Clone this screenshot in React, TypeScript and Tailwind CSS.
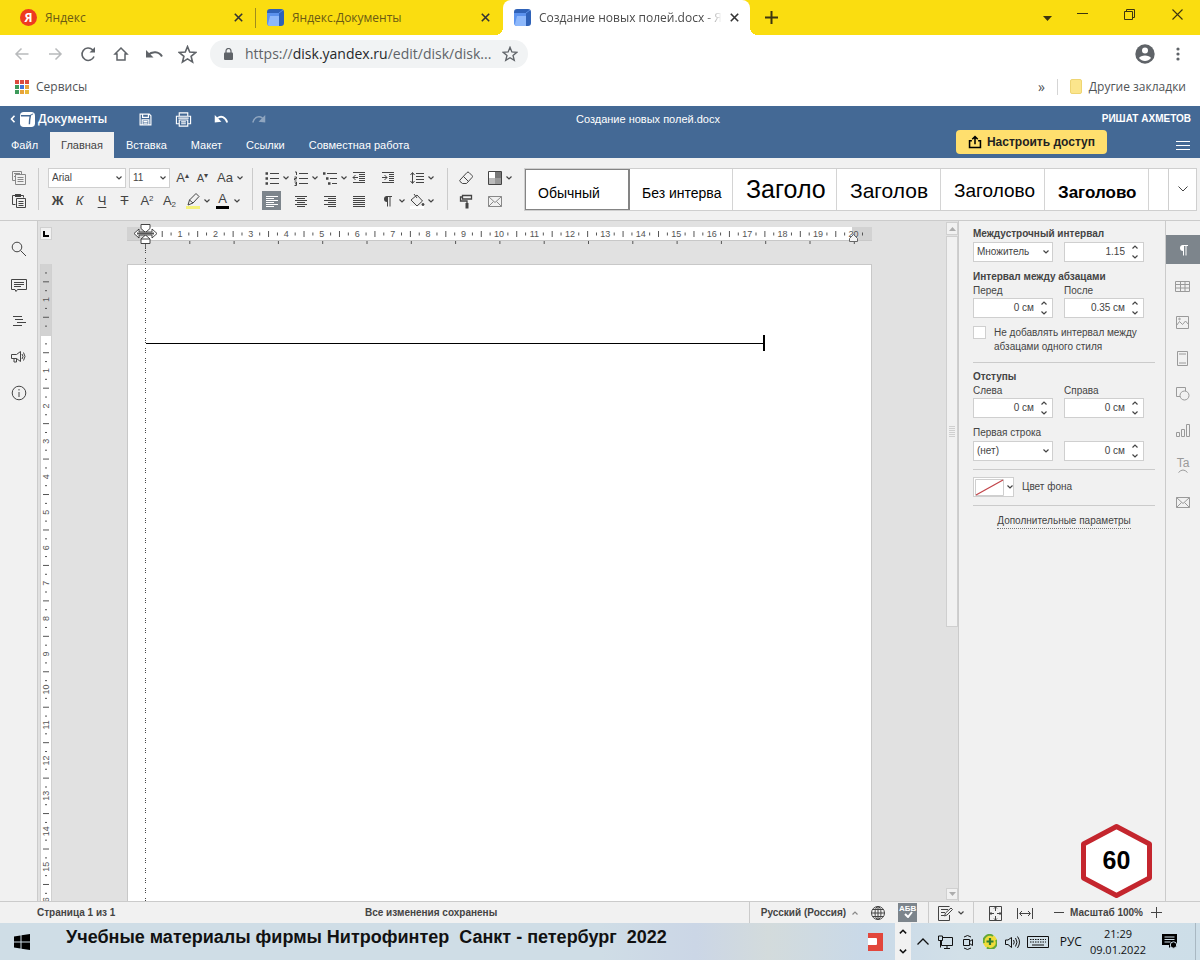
import type { ReactNode } from 'react';
import clsx from 'clsx';

const CM = 35.45;
const PAGE_LEFT_MARGIN = 18;

interface IconProps {
  children: ReactNode;
  size?: number;
  className?: string;
}

// Line icon on an 18 unit grid
function Icon({ children, size = 18, className }: IconProps) {
  return (
    <svg
      width={size}
      height={size}
      viewBox="0 0 18 18"
      fill="none"
      stroke="currentColor"
      aria-hidden="true"
      className={clsx('shrink-0', className)}
    >
      {children}
    </svg>
  );
}

function Chevron({ up = false, className }: { up?: boolean; className?: string }) {
  return (
    <svg width="6" height="4" viewBox="0 0 6 4" fill="none" stroke="currentColor" strokeWidth="1.2" aria-hidden="true" className={clsx('shrink-0', className)}>
      <path d={up ? 'M.5 3.5 3 1l2.5 2.5' : 'M.5.5 3 3 5.5.5'} />
    </svg>
  );
}

function DocsLogo() {
  return (
    <svg width="17" height="17" viewBox="0 0 17 17" aria-hidden="true" className="shrink-0">
      <path d="M3 0h11q3 0 3 3v11q0 3-3 3h-2V4H0V3q0-3 3-3Z" fill="#2f62b8" />
      <path d="M0 4h12v13H3q-3 0-3-3Z" fill="#5b92ee" />
      <path d="M3 7h9v10H3q-2 0-2-2Z" fill="#8db8fb" />
      <path d="m12 4 4-3" stroke="#5b8fe6" />
    </svg>
  );
}

function CloseIcon() {
  return (
    <svg width="9" height="9" viewBox="0 0 9 9" stroke="currentColor" strokeWidth="1.6" aria-hidden="true">
      <path d="m.8.8 7.4 7.4M8.2.8.8 8.2" />
    </svg>
  );
}

function Star({ size }: { size: number }) {
  return (
    <Icon size={size}>
      <path strokeWidth="1.5" d="m9 1.5 2.1 5.2 5.6.4-4.3 3.6 1.4 5.5L9 13.2l-4.8 3 1.4-5.5-4.3-3.6 5.6-.4Z" />
    </Icon>
  );
}

interface BrowserTabProps {
  title: string;
  icon: ReactNode;
  active?: boolean;
  divider?: boolean;
}

function BrowserTab({ title, icon, active, divider }: BrowserTabProps) {
  return (
    <div
      className={clsx(
        'relative flex h-[35px] w-[247px] items-center gap-2 pl-[11px] pr-[13px]',
        active ? 'rounded-t-lg bg-white text-[#4a4a4a]' : 'text-[#6b5b14]',
      )}
    >
      {icon}
      <button
        className={clsx(
          'flex-1 whitespace-nowrap text-left text-[12px] leading-4',
          active && '[mask-image:linear-gradient(to_right,#000_90%,transparent)]',
        )}
      >
        {title}
      </button>
      <button aria-label="Закрыть вкладку" className="text-[#333]">
        <CloseIcon />
      </button>
      {divider && <span className="absolute right-0 top-2 h-5 w-px bg-[#a08c1c]" />}
      {active && (
        <>
          <span className="absolute -left-2 bottom-0 h-2 w-2 bg-[radial-gradient(circle_at_0_0,#fadd10_8px,#fff_8px)]" />
          <span className="absolute -right-2 bottom-0 h-2 w-2 bg-[radial-gradient(circle_at_100%_0,#fadd10_8px,#fff_8px)]" />
        </>
      )}
    </div>
  );
}

function TabStrip() {
  return (
    <div className="flex h-[35px] bg-[#fadd10] pl-[9px]">
      <BrowserTab
        title="Яндекс"
        divider
        icon={
          <span className="flex h-[17px] w-[17px] shrink-0 items-center justify-center rounded-full bg-[#ee3a20] text-[12px] font-bold leading-4 text-white">
            Я
          </span>
        }
      />
      <BrowserTab title="Яндекс.Документы" icon={<DocsLogo />} />
      <BrowserTab title="Создание новых полей.docx - Я" icon={<DocsLogo />} active />
      <button aria-label="Новая вкладка" className="ml-[15px] text-[#3d3510]">
        <svg width="13" height="13" viewBox="0 0 13 13" stroke="currentColor" strokeWidth="2" aria-hidden="true">
          <path d="M6.5 0v13M0 6.5h13" />
        </svg>
      </button>
      <div className="ml-auto flex items-start text-[#3d3510]">
        <button aria-label="Список вкладок" className="mr-[25px] mt-4">
          <svg width="9" height="5" viewBox="0 0 9 5" fill="currentColor" aria-hidden="true"><path d="M0 0h9L4.500 5Z" /></svg>
        </button>
        <button aria-label="Свернуть" className="mr-9 mt-[13px] h-px w-[11px] bg-[#3d3510]" />
        <button aria-label="Восстановить" className="mr-[37px] mt-[9px]">
          <svg width="11" height="11" viewBox="0 0 11 11" fill="none" stroke="currentColor" aria-hidden="true">
            <path d="M.5 2.500h8v8h-8ZM2.500 2.500v-2h8v8h-2" />
          </svg>
        </button>
        <button aria-label="Закрыть" className="mr-[17px] mt-[9px]">
          <svg width="11" height="11" viewBox="0 0 11 11" stroke="currentColor" strokeWidth="1.100" aria-hidden="true">
            <path d="m.5.5 10 10m0-10-10 10" />
          </svg>
        </button>
      </div>
    </div>
  );
}

function AddressBar() {
  return (
    <div className="flex h-[38px] items-center bg-white text-[#5f6368]">
      <div className="flex w-[210px] items-center gap-[15px] pl-[13px]">
        <button aria-label="Назад" className="text-[#b8babc]">
          <Icon><path strokeWidth="1.500" d="M15.500 9h-13M8.500 3.500 3 9l5.500 5.500" /></Icon>
        </button>
        <button aria-label="Вперёд" className="text-[#b8babc]">
          <Icon><path strokeWidth="1.500" d="M3 9h12.500M9.500 3.500 15 9l-5.500 5.500" /></Icon>
        </button>
        <button aria-label="Обновить">
          <Icon>
            <path strokeWidth="1.600" d="M15 11.500A6.200 6.200 0 1 1 13.600 4.800L15.500 6.500" />
            <path fill="currentColor" stroke="none" d="M16 2v5.500h-5.500Z" />
          </Icon>
        </button>
        <button aria-label="Домой">
          <Icon><path strokeWidth="1.500" d="M9 3 3 9h2v6h8V9h2Z" /></Icon>
        </button>
        <button aria-label="Вернуть">
          <Icon>
            <path strokeWidth="2" d="M3 10c4-4 11-4 14 1.500" />
            <path fill="currentColor" stroke="none" d="M1 5v7.500h7.500Z" />
          </Icon>
        </button>
        <button aria-label="Избранное"><Star size={19} /></button>
      </div>
      <div className="flex h-7 w-[318px] items-center rounded-full bg-[#f1f3f4] pl-[14px] pr-[10px]">
        <svg width="9" height="12" viewBox="0 0 9 12" aria-hidden="true">
          <path d="M2 5V3a2.500 2.500 0 0 1 5 0v2" fill="none" stroke="currentColor" strokeWidth="1.200" />
          <rect y="4.500" width="9" height="7.500" rx="1" fill="currentColor" />
        </svg>
        <p className="ml-3 flex-1 text-[14px] leading-5">
          https://<span className="text-[#26282a]">disk.yandex.ru</span>/edit/disk/disk...
        </p>
        <button aria-label="Добавить в закладки"><Star size={16} /></button>
      </div>
      <button aria-label="Профиль" className="ml-auto">
        <svg width="20" height="20" viewBox="0 0 20 20" aria-hidden="true">
          <circle cx="10" cy="10" r="9.700" fill="currentColor" />
          <circle cx="10" cy="6.500" r="3" fill="#fff" />
          <path d="M4 14c1.500-3.500 10.500-3.500 12 0-3 4-9 4-12 0Z" fill="#fff" />
        </svg>
      </button>
      <button aria-label="Меню" className="ml-[21px] mr-5">
        <svg width="4" height="14" viewBox="0 0 4 14" fill="currentColor" aria-hidden="true">
          <circle cx="2" cy="2" r="1.600" /><circle cx="2" cy="7" r="1.600" /><circle cx="2" cy="12" r="1.600" />
        </svg>
      </button>
    </div>
  );
}

const APP_DOTS = ['#dc4b3e', '#dc4b3e', '#dc4b3e', '#3d9a5a', '#4374d9', '#e8a33a', '#3d9a5a', '#e8a33a', '#e8b93a'];

function Bookmarks() {
  return (
    <div className="flex h-[33px] items-center bg-white pb-[6px] pl-[15px] pr-[14px] text-[12px] leading-4 text-[#505356]">
      <a href="#services" className="flex items-center gap-[7px]">
        <svg width="14" height="14" viewBox="0 0 14 14" aria-hidden="true">
          {APP_DOTS.map((fill, i) => (
            <rect key={i} x={(i % 3) * 5} y={Math.floor(i / 3) * 5} width="4" height="4" fill={fill} />
          ))}
        </svg>
        Сервисы
      </a>
      <button aria-label="Ещё закладки" className="ml-auto mr-3 text-[14px] leading-4">»</button>
      <a href="#bookmarks" className="flex items-center gap-[7px] border-l border-[#d5d5d5] pl-3">
        <span className="h-[15px] w-3 rounded-xs border border-[#eed573] bg-[#fbe58c]" />
        Другие закладки
      </a>
    </div>
  );
}

const MENU = ['Файл', 'Главная', 'Вставка', 'Макет', 'Ссылки', 'Совместная работа'];

function EditorHeader() {
  return (
    <header className="bg-[#446995] text-white">
      <div className="grid h-[26px] grid-cols-[1fr_auto_1fr] items-center px-[9px] text-[11px] leading-4">
        <div className="flex items-center">
          <button className="flex items-center text-[12px] font-semibold leading-4 font-['Open_Sans',sans-serif]">
            <svg width="7" height="8" viewBox="0 0 7 8" fill="none" stroke="currentColor" strokeWidth="1.600" aria-hidden="true"><path d="M5.500.8 2.500 4l3 3.200" /></svg>
            <svg width="15" height="15" viewBox="0 0 16 16" aria-hidden="true" className="ml-1 mr-[3px]">
              <rect width="16" height="16" rx="4" fill="#fff" />
              <path d="M1 4h10q-1 5-1 9" fill="none" stroke="#446995" strokeWidth="1.500" />
              <path d="m10 4 4-2" stroke="#446995" />
            </svg>
            Документы
          </button>
          <button aria-label="Сохранить" className="ml-[31px]">
            <Icon size={15}><path strokeWidth="1.400" d="M2.500 2.500h11l2 2v11h-13ZM5.500 2.500v4h7v-4M5 15.500v-6h8v6M6.500 11.500h5m-5 2h5" /></Icon>
          </button>
          <button aria-label="Печать" className="ml-[22px]">
            <Icon size={17}><path strokeWidth="1.200" d="M4.500 5V2h9v3M4.500 13.500h-3v-8h15v8h-3M4.500 9.500h9v6.500h-9Zm2 2h5m-5 2h5M3.500 7.500h11" /></Icon>
          </button>
          <button aria-label="Отменить" className="ml-[21px]">
            <Icon size={16}>
              <path strokeWidth="2" d="M5 8c4-3 9-1.500 11 5" />
              <path fill="currentColor" stroke="none" d="M2 4.500V13l7.500-1Z" />
            </Icon>
          </button>
          <button aria-label="Повторить" disabled className="ml-[22px] opacity-40">
            <Icon size={16}>
              <path strokeWidth="1.600" d="M13 8C9 5 4 6.500 2 13" />
              <path fill="currentColor" stroke="none" d="M16 4.500V13l-7.500-1Z" />
            </Icon>
          </button>
        </div>
        <h1 className="pl-24">Создание новых полей.docx</h1>
        <p className="text-right text-[10px] font-bold">РИШАТ АХМЕТОВ</p>
      </div>
      <nav className="flex h-[26px] items-end pl-[11px] text-[11px] leading-[26px]">
        {MENU.map((item) => (
          <button
            key={item}
            className={clsx(
              item === 'Файл' && 'pr-3',
              item === 'Главная' ? 'bg-[#f1f1f1] px-[11px] text-[#444]' : 'text-white',
              item !== 'Файл' && item !== 'Главная' && 'px-3',
            )}
          >
            {item}
          </button>
        ))}
        <button className="mb-1 ml-auto mr-[69px] flex h-6 items-center gap-[5px] rounded-sm bg-[#ffdf6e] px-3 text-[12px] font-bold leading-5 text-[#222]">
          <Icon size={14} className="text-black"><path strokeWidth="2" d="M5 7.500H2v8.500h14V7.500h-3M9 12V2.500M5.500 5.500 9 2l3.500 3.500" /></Icon>
          Настроить доступ
        </button>
        <button aria-label="Параметры вида" className="mb-[7px] mr-[10px]">
          <svg width="14" height="11" viewBox="0 0 14 11" stroke="#fff" aria-hidden="true"><path d="M0 1.500h14M0 5.500h14M0 9.500h14" /></svg>
        </button>
      </nav>
    </header>
  );
}

interface ToolProps {
  label: string;
  children: ReactNode;
  menu?: boolean;
  active?: boolean;
  className?: string;
}

function Tool({ label, children, menu, active, className = 'w-[29px]' }: ToolProps) {
  return (
    <button aria-label={label} className={clsx('flex h-5 items-center', className)}>
      <span className={clsx('flex h-[19px] w-[19px] items-center justify-center', active && 'bg-[#7d858c] text-white')}>
        {children}
      </span>
      {menu && <Chevron className="ml-[2px]" />}
    </button>
  );
}

function Divider() {
  return <div className="h-[42px] w-px shrink-0 bg-[#cbcbcb]" />;
}

function FontControls() {
  return (
    <div className="ml-[9px] mr-2 flex w-[196px] shrink-0 flex-col gap-[3px]">
      <div className="flex h-5 items-center">
        <div className="relative mr-[3px] flex w-[78px]">
          <select aria-label="Шрифт" className="h-5 w-full appearance-none border border-[#cfcfcf] bg-white pl-[3px] text-[10px] leading-4">
            <option>Arial</option>
          </select>
          <Chevron className="pointer-events-none absolute right-1 top-2" />
        </div>
        <div className="relative flex w-[41px]">
          <select aria-label="Размер" className="h-5 w-full appearance-none border border-[#cfcfcf] bg-white pl-[3px] text-[10px] leading-4">
            <option>11</option>
          </select>
          <Chevron className="pointer-events-none absolute right-1 top-2" />
        </div>
        <Tool label="Увеличить размер" className="ml-[3px] w-5">
          <span className="text-[13px] leading-4">A<sup className="text-[8px]">▴</sup></span>
        </Tool>
        <Tool label="Уменьшить размер" className="w-6">
          <span className="text-[11px] leading-4">A<sup className="text-[8px]">▾</sup></span>
        </Tool>
        <button aria-label="Регистр" className="flex items-center gap-1 text-[13px] leading-4">
          Aa <Chevron />
        </button>
      </div>
      <div className="flex h-5 items-center text-[13px] leading-5">
        <button className="w-[19px] text-center font-bold">Ж</button>
        <button className="w-[25px] text-center italic">К</button>
        <button className="w-5 text-center underline underline-offset-2">Ч</button>
        <button className="w-[25px] text-center line-through">Т</button>
        <button className="w-5 text-center">A<sup className="text-[8px]">2</sup></button>
        <button className="w-[25px] text-center">A<sub className="text-[8px]">2</sub></button>
        <Tool label="Цвет выделения" menu className="ml-px w-[30px]">
          <Icon>
            <path fill="#f4f17a" stroke="none" d="M2 14h14v3H2Z" />
            <path d="m4 13 1.500-5L12 1.500 15 4.500 9 11Zm1.500-5L9 11" />
          </Icon>
        </Tool>
        <Tool label="Цвет шрифта" menu className="w-[30px]">
          <span className="w-[13px] border-b-[3px] border-black text-center text-[13px] leading-[14px]">A</span>
        </Tool>
      </div>
    </div>
  );
}

const ALIGN = {
  left: 'M3 4.500h12M3 6.500h8M3 8.500h12M3 10.500h8M3 12.500h12M3 14.500h8',
  center: 'M3 4.500h12M5 6.500h8M3 8.500h12M5 10.500h8M3 12.500h12M5 14.500h8',
  right: 'M3 4.500h12M7 6.500h8M3 8.500h12M7 10.500h8M3 12.500h12M7 14.500h8',
  full: 'M3 4.500h12M3 6.500h12M3 8.500h12M3 10.500h12M3 12.500h12M3 14.500h12',
};

function ParagraphControls() {
  return (
    <div className="ml-[9px] mr-[11px] grid shrink-0 grid-cols-[repeat(6,29px)] gap-y-[3px]">
      <Tool label="Маркеры" menu>
        <Icon><path d="M7 4.500h9M7 9.500h9M7 14.500h9" /><path strokeWidth="2.500" d="M2.500 4.500H5M2.500 9.500H5M2.500 14.500H5" /></Icon>
      </Tool>
      <Tool label="Нумерация" menu>
        <Icon><path d="M7 4.500h9M7 9.500h9M7 14.500h9M3 3h1.500v3M2.500 8h2v1.500h-2V11h2M2.500 13h2v3.500h-2M3 14.800h1.500" /></Icon>
      </Tool>
      <Tool label="Многоуровневый список" menu>
        <Icon><path d="M6 4.500h10M9 9.500h7M11 14.500h5" /><path strokeWidth="2.500" d="M2 4.500h2.500M5 9.500h2.500M7 14.500h2.500" /></Icon>
      </Tool>
      <Tool label="Уменьшить отступ">
        <Icon><path d="M3 3.500h12M9 5.500h6M9 7.500h6M9 9.500h6M9 11.500h6M3 13.500h12M8 8.500H3M5.500 6 3 8.500 5.500 11" /></Icon>
      </Tool>
      <Tool label="Увеличить отступ">
        <Icon><path d="M3 3.500h12M10 5.500h5M10 7.500h5M10 9.500h5M10 11.500h5M3 13.500h12M3 8.500h5M5.500 6 8 8.500 5.500 11" /></Icon>
      </Tool>
      <Tool label="Междустрочный интервал" menu>
        <Icon><path d="M8 4.500h8M8 7.500h8M8 10.500h8M8 13.500h8M4.500 4v10M2.500 6l2-2.500 2 2.500M2.500 12l2 2.500 2-2.500" /></Icon>
      </Tool>
      <Tool label="По левому краю" active><Icon><path d={ALIGN.left} /></Icon></Tool>
      <Tool label="По центру"><Icon><path d={ALIGN.center} /></Icon></Tool>
      <Tool label="По правому краю"><Icon><path d={ALIGN.right} /></Icon></Tool>
      <Tool label="По ширине"><Icon><path d={ALIGN.full} /></Icon></Tool>
      <Tool label="Непечатаемые символы" menu>
        <Icon><path d="M8.500 4v10.500M11 4v10.500M7.500 4.500H13" /><path fill="currentColor" stroke="none" d="M9 4v6H8a3 3 0 0 1 0-6Z" /></Icon>
      </Tool>
      <Tool label="Заливка" menu>
        <Icon>
          <path fill="#fff" stroke="none" d="M2 14h14v3H2Z" />
          <path d="m3 8 6-5 5.500 6-5.500 5ZM6 2l3 4" />
          <circle cx="15" cy="12.500" r="1" fill="currentColor" />
        </Icon>
      </Tool>
    </div>
  );
}

interface DocStyle {
  name: string;
  className: string;
}

const STYLES: DocStyle[] = [
  { name: 'Обычный', className: 'text-[14px] leading-4' },
  { name: 'Без интерва', className: 'text-[14px] leading-4' },
  { name: 'Заголо', className: 'text-[25px] leading-6' },
  { name: 'Заголов', className: 'text-[21px] leading-5' },
  { name: 'Заголово', className: 'text-[19px] leading-5' },
  { name: 'Заголово', className: 'text-[17px] leading-4 font-bold' },
];

function StyleGallery() {
  return (
    <div className="mr-[3px] flex h-[43px] min-w-0 flex-1 border border-[#cfcfcf] bg-white text-black">
      <div className="flex min-w-0 flex-1 overflow-hidden">
        {STYLES.map((style, i) => (
          <button
            key={i}
            className={clsx(
              'flex w-[104px] shrink-0 items-end pb-[9px] pl-[13px]',
              i === 0 ? 'outline-2 -outline-offset-1 outline-[#848484]' : 'border-r border-[#d4d4d4]',
            )}
          >
            <span className={clsx('whitespace-nowrap text-left', style.className)}>{style.name}</span>
          </button>
        ))}
      </div>
      <button aria-label="Все стили" className="flex w-7 items-center justify-center border-l border-[#cfcfcf] text-[#444]">
        <svg width="10" height="6" viewBox="0 0 10 6" fill="none" stroke="currentColor" aria-hidden="true"><path d="m.5.5 4.500 4.500L9.500.5" /></svg>
      </button>
    </div>
  );
}

function Envelope() {
  return <path d="M2.500 4.500h13v10h-13Zm0 0L9 10.500l6.500-6M2.500 14.500l5-5M15.500 14.500l-5-5" />;
}

function Toolbar() {
  return (
    <div className="flex h-[63px] items-center border-b border-[#cbcbcb] bg-[#f1f1f1] text-[#444]">
      <div className="ml-[9px] mr-[10px] flex flex-col gap-[3px]">
        <Tool label="Копировать" className="w-[19px] opacity-60">
          <Icon><path d="M5.500 11.500h-3v-9h9v3M5.500 5.500h10v10h-10Zm2 3h6m-6 2h6m-6 2h6M4 4.500h6M4 7.500h1" /></Icon>
        </Tool>
        <Tool label="Вставить" className="w-[19px]">
          <Icon><path d="M5.500 12.500h-3v-9h11v2M6.500 6.500h9v9h-9Zm2 3h5m-5 2h5m-5 2h5" /><path strokeWidth="3" d="M5 3.500h6" /></Icon>
        </Tool>
      </div>
      <Divider />
      <FontControls />
      <Divider />
      <ParagraphControls />
      <Divider />
      <div className="ml-2 mr-[11px] grid shrink-0 grid-cols-[29px_28px] gap-y-[3px]">
        <Tool label="Очистить стиль">
          <Icon><path d="m3 11 7-7.500q1-1 2 0l3 3q1 1 0 2L9.500 14.500h-4L3 12.500q-.7-.8 0-1.500ZM6.500 7.500l5 5" /></Icon>
        </Tool>
        <Tool label="Заливка ячеек" menu>
          <Icon>
            <path fill="#fff" stroke="none" d="M3 3h6v6H3Z" />
            <path fill="#777" stroke="none" d="M9 3h6v6H9Z" />
            <path fill="#bbb" stroke="none" d="M3 9h6v6H3Z" />
            <path fill="#999" stroke="none" d="M9 9h6v6H9Z" />
            <path d="M2.500 2.500h13v13h-13Z" />
          </Icon>
        </Tool>
        <Tool label="Копировать стиль">
          <Icon><path strokeWidth="1.300" d="M5.500 3.500h9v3.500h-9ZM5.500 5H3.500v4H10v2" /><path strokeWidth="3" d="M10 11v5.500" /></Icon>
        </Tool>
        <Tool label="Слияние"><Icon className="opacity-60"><Envelope /></Icon></Tool>
      </div>
      <StyleGallery />
    </div>
  );
}

const QUARTERS = Array.from({ length: 80 }, (_, i) => i + 1);
const VERTICAL_QUARTERS = Array.from({ length: 72 }, (_, i) => i - 7).filter((q) => q !== 0);

function HorizontalRuler() {
  return (
    <svg width="745" height="24" viewBox="0 0 745 24" aria-hidden="true" className="mt-[3px] shrink-0">
      <path d="M0 3h745v13H0Z" fill="#d2d2d2" />
      <path d={`M${PAGE_LEFT_MARGIN} 3h707v13h-707Z`} fill="#fff" />
      <path d="M0 16.500h745" stroke="#c8c8c8" />
      {QUARTERS.map((q) => {
        const x = 17.5 + (q * CM) / 4;
        if (q % 4 === 0) {
          return (
            <text key={q} x={x} y="13" textAnchor="middle" fontSize="9" fill="#555">{q / 4}</text>
          );
        }
        return <path key={q} d={q % 2 ? `M${x} 8.500v3` : `M${x} 7v6`} stroke="#555" />;
      })}
      {Array.from({ length: 16 }, (_, i) => (
        <path key={i} d={`M${18.5 + (i + 1) * 44.3} 17v3`} stroke="#555" />
      ))}
      <path d="M735.500 8.500v3" stroke="#555" />
      <path d="M722.500 17.500v-3l4-4 4 4v3Z" fill="#f4f4f4" stroke="#666" />
      {/* left indent handles with the resize cursor over them */}
      <path d="M14 .5h9v4l-4.500 4-4.500-4ZM14 19.500v-4.500l4.500-4 4.500 4v4.500Zm0-4.500h9" fill="#fff" stroke="#444" />
      <path d="m7 9.500 5-4.500v3h13V5l5 4.500-5 4.500v-3H12v3Z" fill="#fff" stroke="#222" strokeWidth=".8" />
      <path d="M10 9.500h17" stroke="#555" strokeWidth="2" />
      <path d="M18.500 20v4" stroke="#666" />
    </svg>
  );
}

function VerticalRuler() {
  return (
    <svg width="12" height="645" viewBox="0 0 12 645" aria-hidden="true" className="absolute -left-px top-0">
      <path d="M0 0h12v72H0Z" fill="#d2d2d2" />
      {VERTICAL_QUARTERS.map((q) => {
        const y = 71 + (q * CM) / 4;
        if (q % 4 === 0) {
          return (
            <text key={q} transform={`translate(9 ${y}) rotate(-90)`} textAnchor="middle" fontSize="9" fill="#555">{Math.abs(q / 4)}</text>
          );
        }
        return <path key={q} d={q % 2 ? `M5 ${y}h2` : `M3 ${y}h6`} stroke="#555" />;
      })}
    </svg>
  );
}

function Canvas() {
  return (
    <main className="flex min-w-0 flex-1 border-l border-[#cbcbcb] bg-[#e1e1e1] pl-[2px]">
      <div className="flex w-3 shrink-0 flex-col">
        <button aria-label="Тип табуляции" className="mt-[6px] flex h-[13px] w-3 items-center justify-center border border-[#d0d0d0] bg-[#f1f1f1]">
          <span className="h-[6px] w-[6px] border-b-2 border-l-2 border-black" />
        </button>
        <div className="relative mt-6 flex-1 overflow-hidden border-x border-[#d0d0d0] bg-white">
          <VerticalRuler />
        </div>
      </div>
      <div className="flex min-w-0 flex-1 flex-col items-center overflow-hidden">
        <HorizontalRuler />
        <article className="relative mt-4 w-[745px] flex-1 border border-b-0 border-[#c8c8c8] bg-white pl-[18px] pt-[70px]">
          <div className="flex h-4 w-[619px] items-center">
            <hr className="flex-1 border-black" />
            <span className="h-4 w-[2px] bg-black" />
          </div>
          <div className="absolute -top-[17px] bottom-0 left-[17px] w-px bg-[repeating-linear-gradient(to_bottom,#444_0_1px,transparent_1px_2px,#444_2px_3px,transparent_3px_4px,#444_4px_5px,transparent_5px_10px)]" />
        </article>
      </div>
      <div className="flex w-3 shrink-0 flex-col">
        <button aria-label="Прокрутить вверх" className="mt-px flex h-[13px] items-center justify-center border border-[#d0d0d0] bg-[#f1f1f1]">
          <svg width="7" height="4" viewBox="0 0 7 4" fill="#adadad" aria-hidden="true"><path d="M0 4h7L3.500 0Z" /></svg>
        </button>
        <div className="mt-px flex-1">
          <div className="flex h-[60%] flex-col items-center justify-center gap-px border border-[#cfcfcf] bg-[#f1f1f1]">
            {[0, 1, 2, 3, 4, 5].map((i) => <span key={i} className="h-px w-[6px] bg-[#cfcfcf]" />)}
          </div>
        </div>
        <button aria-label="Прокрутить вниз" className="mb-px flex h-3 items-center justify-center border border-[#d0d0d0] bg-[#f1f1f1]">
          <svg width="7" height="4" viewBox="0 0 7 4" fill="#adadad" aria-hidden="true"><path d="M0 0h7L3.500 4Z" /></svg>
        </button>
      </div>
    </main>
  );
}

function LeftSidebar() {
  return (
    <aside className="flex w-[37px] shrink-0 flex-col items-center gap-[18px] bg-[#f1f1f1] pt-[19px] text-[#444]">
      <button aria-label="Поиск"><Icon><circle cx="7" cy="7" r="4.800" /><path d="m10.500 10.500 5.500 5.500" /></Icon></button>
      <button aria-label="Комментарии"><Icon><path d="M1.500 3.500h15v10h-9L6 15.500l-1-2H1.500ZM4 6.500h10M4 8.500h10M4 10.500h7" /></Icon></button>
      <button aria-label="Навигация"><Icon><path d="M3 4.500h9M5 7.500h8M7 10.500h9M3 13.500h9" /></Icon></button>
      <button aria-label="Обратная связь"><Icon><path d="M1.500 6.500h5l4-3v10l-4-3h-5ZM4 10.500v3.500h2.500v-3.500M12 6q2 2.500 0 5M13.500 4.500q3 4 0 8" /></Icon></button>
      <button aria-label="О программе"><Icon><circle cx="9" cy="9" r="6.800" /><path d="M9 8v5M9 5v1.500" /></Icon></button>
    </aside>
  );
}

function SelectField({ id, label, value }: { id: string; label: string; value: string }) {
  return (
    <div className="relative h-5 w-20">
      <select id={id} aria-label={label} className="h-5 w-full appearance-none border border-[#cfcfcf] bg-white pl-[3px]">
        <option>{value}</option>
      </select>
      <Chevron className="pointer-events-none absolute right-1 top-2" />
    </div>
  );
}

function SpinField({ id, label, value }: { id: string; label?: string; value: string }) {
  return (
    <div className="flex h-5 w-20 items-center border border-[#cfcfcf] bg-white pr-[5px]">
      <input id={id} aria-label={label} defaultValue={value} className="w-0 flex-1 bg-transparent pr-[7px] text-right outline-none" />
      <span className="flex flex-col gap-[6px]">
        <button aria-label="Больше" className="block h-1"><Chevron up className="block" /></button>
        <button aria-label="Меньше" className="block h-1"><Chevron className="block" /></button>
      </span>
    </div>
  );
}

function ParagraphPanel() {
  return (
    <section className="relative w-[207px] shrink-0 border-l border-[#cbcbcb] bg-[#f1f1f1] pl-[14px] pr-[10px] pt-[6px] text-[10px] leading-[14px] text-[#444]">
      <h2 className="font-bold">Междустрочный интервал</h2>
      <div className="mt-px flex gap-[11px]">
        <SelectField id="spacing-kind" label="Междустрочный интервал" value="Множитель" />
        <SpinField id="spacing-value" label="Значение интервала" value="1.15" />
      </div>
      <h2 className="mt-2 font-bold">Интервал между абзацами</h2>
      <div className="grid grid-cols-[80px_80px] gap-x-[11px]">
        <label htmlFor="before">Перед</label>
        <label htmlFor="after">После</label>
        <SpinField id="before" value="0 см" />
        <SpinField id="after" value="0.35 см" />
      </div>
      <label className="mt-2 flex items-start gap-2">
        <input type="checkbox" className="h-[13px] w-[13px] shrink-0 appearance-none border border-[#cfcfcf] bg-white" />
        <span>Не добавлять интервал между абзацами одного стиля</span>
      </label>
      <hr className="mt-2 border-[#cbcbcb]" />
      <h2 className="mt-[7px] font-bold">Отступы</h2>
      <div className="grid grid-cols-[80px_80px] gap-x-[11px]">
        <label htmlFor="left">Слева</label>
        <label htmlFor="right">Справа</label>
        <SpinField id="left" value="0 см" />
        <SpinField id="right" value="0 см" />
      </div>
      <label htmlFor="first-line" className="mt-2 block">Первая строка</label>
      <div className="mt-px flex gap-[11px]">
        <SelectField id="first-line" label="Первая строка" value="(нет)" />
        <SpinField id="first-line-value" label="Отступ первой строки" value="0 см" />
      </div>
      <hr className="mt-2 border-[#cbcbcb]" />
      <div className="mt-[7px] flex items-center gap-2">
        <button id="fill" className="flex h-5 w-[41px] items-center gap-[3px] border border-[#cfcfcf] bg-white pl-px">
          <svg width="29" height="17" viewBox="0 0 29 17" fill="none" aria-hidden="true">
            <path d="M.5.5h28v16H.5Z" stroke="#cfcfcf" />
            <path d="m1 16 27-15" stroke="#c2454a" strokeWidth="1.300" />
          </svg>
          <Chevron />
        </button>
        <label htmlFor="fill">Цвет фона</label>
      </div>
      <hr className="mt-2 border-[#cbcbcb]" />
      <p className="mt-2 text-center">
        <a href="#advanced" className="inline-block border-b border-dotted border-[#777]">Дополнительные параметры</a>
      </p>
      <div className="absolute bottom-0 right-3 flex h-[80px] w-[73px] items-center justify-center">
        <svg width="73" height="76" viewBox="0 0 73 76" aria-hidden="true" className="absolute">
          <path d="m36.500 3.500 33 17.500v34l-33 17.500-33-17.500V21Z" fill="#fff" stroke="#c4262e" strokeWidth="5" strokeLinejoin="round" />
        </svg>
        <span className="relative pb-[3px] text-[25px] font-bold leading-7 text-black">60</span>
      </div>
    </section>
  );
}

function RightSidebar() {
  return (
    <aside className="flex w-[35px] shrink-0 flex-col border-l border-[#cbcbcb] bg-[#f1f1f1] pt-[14px] text-[#9a9a9a] [&>button]:mb-[7px] [&>button]:flex [&>button]:h-[29px] [&>button]:items-center [&>button]:justify-center">
      <button aria-label="Абзац" className="bg-[#7d858c] text-white">
        <Icon><path d="M9.500 4v10.500M12 4v10.500M8.500 4.500H14" /><path fill="currentColor" stroke="none" d="M10 4v6H9a3 3 0 0 1 0-6Z" /></Icon>
      </button>
      <button aria-label="Таблица"><Icon><path d="M1.500 4.500h14v10h-14Zm0 3h14m-14 3.500h14M6.500 4.500v10M11 4.500v10" /></Icon></button>
      <button aria-label="Изображение"><Icon><path d="M2.500 3.500h12v12h-12Zm0 9 3-4 3 3 3-3.500 3 3.500" /><circle cx="5.500" cy="6" r=".8" /></Icon></button>
      <button aria-label="Колонтитулы"><Icon><path d="M3.500 2.500h10v14h-10ZM5 5h7M5 14h7" /></Icon></button>
      <button aria-label="Фигура"><Icon><path d="M6 11.500H2.500v-9h9V6" /><circle cx="10.500" cy="10.500" r="4.500" /></Icon></button>
      <button aria-label="Диаграмма"><Icon><path d="M2.500 11.500h3v4h-3ZM7.500 8.500h3v7h-3ZM12.500 3.500h3v12h-3Z" /></Icon></button>
      <button aria-label="Текст" className="text-[12px] leading-4">
        <span className="flex flex-col items-center leading-[11px]">
          Ta
          <svg width="10" height="4" viewBox="0 0 10 4" fill="none" stroke="currentColor" aria-hidden="true"><path d="M.5 3.500q4.500-5 9 0" /></svg>
        </span>
      </button>
      <button aria-label="Рассылка"><Icon><Envelope /></Icon></button>
    </aside>
  );
}

function StatusBar() {
  return (
    <footer className="flex h-[22px] items-center border-t border-[#cbcbcb] bg-[#f1f1f1] text-[10px] font-bold leading-4 text-[#444]">
      <span className="w-[365px] pl-[37px]">Страница 1 из 1</span>
      <span>Все изменения сохранены</span>
      <div className="ml-auto flex h-full items-center border-l border-[#cbcbcb] pl-[11px]">
        <button className="flex items-center gap-[6px]">Русский (Россия) <Chevron up className="opacity-60" /></button>
        <button aria-label="Язык документа" className="ml-[11px]">
          <Icon><circle cx="9" cy="9" r="6.500" /><ellipse cx="9" cy="9" rx="3" ry="6.500" /><path d="M9 2.500v13M2.500 9h13M3.500 5.500h11M3.500 12.500h11" /></Icon>
        </button>
        <button aria-label="Проверка орфографии" className="relative ml-[11px] h-[19px] w-[19px] bg-[#7d858c] text-[8px] font-bold leading-[9px] text-white">
          <span className="block h-[17px]">АБВ</span>
          <svg width="9" height="7" viewBox="0 0 9 7" fill="none" stroke="#fff" strokeWidth="2" aria-hidden="true" className="absolute bottom-1 right-1"><path d="m1 3 3 3 4-5" /></svg>
        </button>
      </div>
      <div className="ml-[11px] flex h-full items-center border-l border-[#cbcbcb] pl-[7px]">
        <button aria-label="Рецензирование" className="flex items-center gap-1">
          <Icon><path d="M13.500 11v5.500h-11v-14h11M5 5.500h7M5 8.500h4M5 11.500h3M8.500 12l1-3L15 4l1.500 1.500L11 11Z" /></Icon>
          <Chevron />
        </button>
      </div>
      <div className="ml-[9px] mr-[38px] flex h-full items-center border-l border-[#cbcbcb] pl-[12px]">
        <button aria-label="По размеру страницы">
          <Icon><path d="M3.500 2.500h12v14h-12ZM9.500 3v4M9.500 12v4M4 9.500h4M11 9.500h4M8 4.500 9.500 3 11 4.500M8 14.500 9.500 16l1.500-1.500M5.500 8 4 9.500 5.500 11M13.500 8 15 9.500 13.500 11" /></Icon>
        </button>
        <button aria-label="По ширине" className="ml-3">
          <Icon><path d="M1.500 4v11M16.500 4v11M4 9.500h10M6 7 3.500 9.500 6 12M12 7l2.500 2.500L12 12" /></Icon>
        </button>
        <button aria-label="Уменьшить" className="ml-5 mr-[6px] h-px w-[10px] bg-[#444]" />
        <span>Масштаб 100%</span>
        <button aria-label="Увеличить" className="ml-2">
          <svg width="11" height="11" viewBox="0 0 11 11" stroke="currentColor" aria-hidden="true"><path d="M5.500 0v11M0 5.500h11" /></svg>
        </button>
      </div>
    </footer>
  );
}

function Taskbar() {
  return (
    <div className="flex h-[37px] items-center bg-[linear-gradient(to_right,#cfdde6_0,#cfdde6_50%,#cbd6e6_58%,#d3dbdc_64%,#c9d9e8_72%,#d2e0e8_80%,#cddee8_100%)] text-[#111]">
      <button aria-label="Пуск" className="ml-[14px]">
        <svg width="16" height="16" viewBox="0 0 16 16" aria-hidden="true">
          <path d="M0 2.500 6.500 1.500v6H0ZM7.500 1.300 16 0v7.500H7.500ZM0 8.500h6.500v6L0 13.500ZM7.500 8.500H16V16l-8.500-1.300Z" />
        </svg>
      </button>
      <p className="ml-9 whitespace-pre pb-[9px] text-[18px] font-bold leading-5">
        Учебные материалы фирмы Нитрофинтер  Санкт - петербург  2022
      </p>
      <button aria-label="Запись экрана" className="ml-auto">
        <svg width="15" height="18" viewBox="0 0 15 18" aria-hidden="true">
          <path d="M0 0h15v18H0Z" fill="#e2463c" />
          <path d="M0 5h8q1 0 1 1v5q0 1-1 1H0Z" fill="#fff" />
        </svg>
      </button>
      <div className="ml-3 flex h-full w-4 flex-col items-center justify-between bg-[#f1f1f1] py-[6px]">
        <button aria-label="Выше"><Chevron up className="block h-[5px] w-2" /></button>
        <button aria-label="Ниже"><Chevron className="block h-[5px] w-2" /></button>
      </div>
      <button aria-label="Скрытые значки" className="ml-[6px]">
        <svg width="12" height="7" viewBox="0 0 12 7" fill="none" stroke="currentColor" strokeWidth="1.300" aria-hidden="true"><path d="m.5 6.500 5.500-5.500 5.500 5.500" /></svg>
      </button>
      <Icon className="ml-[7px]"><path d="M6.500 4.500h10v8h-11V8M11 12.500v3M8 15.500h6M2.500 3v4.500h4V3ZM4.500 7.500v7" /></Icon>
      <Icon className="ml-[5px]"><path d="M4.500 6.500h6v6h-6ZM10.500 8.500l3-2v6l-3-2M5 4q3.500-3 7 0M5 15q3.500 3 7 0" /></Icon>
      <svg width="14" height="15" viewBox="0 0 14 15" aria-hidden="true" className="ml-[6px]">
        <circle cx="7" cy="7.500" r="7" fill="#efdc3a" />
        <path d="M1 9a6 6 0 0 1 9-7M13 6a6 6 0 0 1-9 7.500" fill="none" stroke="#62a83a" strokeWidth="2" />
        <path d="M7 4v7M3.500 7.500h7" stroke="#2e7d32" strokeWidth="2.200" />
      </svg>
      <Icon className="ml-[6px]"><path d="M2.500 7v4.500h2.500l3.500 3v-10L5 7ZM10.500 7q1.500 2 0 4.500M12.500 5q3 4 0 8.500M14.500 3.500q4 5.500 0 11.500" /></Icon>
      <svg width="22" height="12" viewBox="0 0 22 12" fill="none" stroke="currentColor" aria-hidden="true" className="ml-[6px]">
        <path d="M.5.5h21v11H.5Z" /><path d="M3 3.500h16M3 6h16" strokeDasharray="1.500 1" /><path d="M5 9h12" />
      </svg>
      <span className="ml-[11px] font-['Open_Sans',sans-serif] text-[12px] leading-4">РУС</span>
      <div className="ml-2 text-center font-['Open_Sans',sans-serif] text-[11px] leading-4">
        <p>21:29</p>
        <p>09.01.2022</p>
      </div>
      <button aria-label="Уведомления" className="ml-[15px]">
        <svg width="17" height="17" viewBox="0 0 17 17" aria-hidden="true">
          <path d="M1 1h15v11h-5l-3 3v-3H1Z" />
          <path d="M3.500 4h10M3.500 6.500h10M3.500 9h6" stroke="#cddee8" />
          <circle cx="12.500" cy="12" r="3.200" stroke="#cddee8" />
        </svg>
      </button>
      <div className="ml-[17px] h-full w-[5px] border-l border-[#a9b8c2]" />
    </div>
  );
}

export default function App() {
  return (
    <div className="flex min-h-screen flex-col bg-[#f1f1f1] font-['Liberation_Sans',Arial,sans-serif]">
      <div className="font-['Open_Sans','Noto_Sans',sans-serif]">
        <TabStrip />
        <AddressBar />
        <Bookmarks />
      </div>
      <EditorHeader />
      <Toolbar />
      <div className="flex flex-1">
        <LeftSidebar />
        <Canvas />
        <ParagraphPanel />
        <RightSidebar />
      </div>
      <StatusBar />
      <Taskbar />
    </div>
  );
}
